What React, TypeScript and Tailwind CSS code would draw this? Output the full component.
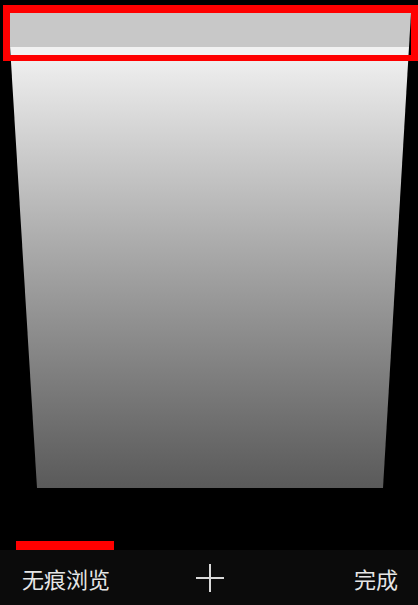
const PlusIcon = () => (
  <svg width="30" height="30" viewBox="0 0 30 30" fill="none">
    <path d="M15 1v28M1 15h28" stroke="#d9d9d9" strokeWidth="2" />
  </svg>
);

const TabCard = () => {
  return (
    <div className="h-[488px] pt-[13px]">
      <div className="flex h-full flex-col [clip-path:polygon(8px_0,411px_0,383px_100%,37px_100%)]">
        <div className="h-[34px] bg-[#c8c8c8]" />
        <div className="h-[8px] bg-[#f2f2f2]" />
        <div className="flex-1 bg-gradient-to-b from-[#f0f0f0] to-[#5a5a5a]" />
      </div>
    </div>
  );
};

export default function App() {
  return (
    <div
      className="relative flex h-[605px] w-[418px] flex-col overflow-hidden bg-black"
      style={{ fontFamily: '"Noto Sans CJK SC", "Noto Sans", sans-serif' }}
    >
      <TabCard />
      <div className="absolute left-[3px] top-[5px] h-[56px] w-[415px] border-x-[7px] border-t-[8px] border-b-[6px] border-[#ff0000]" />
      <div className="h-[53px]" />
      <div className="ml-[16px] h-[9px] w-[98px] bg-[#ff0000]" />
      <div className="grid h-[55px] grid-cols-3 items-center bg-[#0b0b0b] text-[22px] text-[#e6e6e6]">
        <span className="pl-[22px] leading-none">无痕浏览</span>
        <div className="flex justify-center pl-[2px]">
          <PlusIcon />
        </div>
        <span className="pr-[20px] text-right leading-none">完成</span>
      </div>
    </div>
  );
}
